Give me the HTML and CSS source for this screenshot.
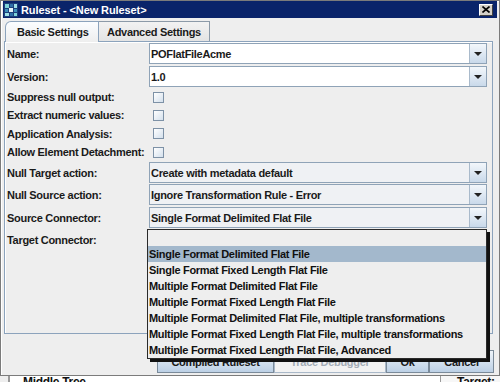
FILE: index.html
```html
<!DOCTYPE html>
<html>
<head>
<meta charset="utf-8">
<title>Ruleset</title>
<link rel="stylesheet" href="styles.css">
</head>
<body>
<div class="dialog">
  <div class="titlebar">
    <svg class="app-icon" viewBox="0 0 14 14" width="14" height="14">
      <rect x="0" y="0" width="14" height="14" fill="#1d3f7a"/>
      <rect x="1" y="1" width="4" height="4" fill="#7fd3d8"/>
      <rect x="6" y="1" width="3" height="3" fill="#2f6fa8"/>
      <rect x="10" y="1" width="3" height="4" fill="#9fe0e6"/>
      <rect x="1" y="6" width="3" height="3" fill="#3c8fb8"/>
      <rect x="5" y="5" width="4" height="4" fill="#e6f4f6"/>
      <rect x="10" y="6" width="3" height="3" fill="#3c8fb8"/>
      <rect x="1" y="10" width="4" height="3" fill="#9fe0e6"/>
      <rect x="6" y="10" width="3" height="3" fill="#2f6fa8"/>
      <rect x="10" y="10" width="3" height="3" fill="#7fd3d8"/>
    </svg>
    <span class="title">Ruleset - &lt;New Ruleset&gt;</span>
    <span class="close">
      <svg viewBox="0 0 8 7" width="8" height="7">
        <path d="M0.5 0.5 L7.5 6.5 M7.5 0.5 L0.5 6.5" stroke="#000" stroke-width="1.6" fill="none"/>
      </svg>
    </span>
  </div>

  <div class="tabs">
    <div class="tab selected">Basic Settings</div>
    <div class="tab other">Advanced Settings</div>
  </div>

  <div class="panel">
    <div class="row combo-row gap2">
      <span class="lbl">Name:</span>
      <div class="combo edit"><span class="field">POFlatFileAcme</span><span class="arrow"><svg viewBox="0 0 8 4" width="8" height="4"><polygon points="0,0 8,0 4,4" fill="#222"/></svg></span></div>
    </div>
    <div class="row combo-row gap2">
      <span class="lbl">Version:</span>
      <div class="combo edit"><span class="field">1.0</span><span class="arrow"><svg viewBox="0 0 8 4" width="8" height="4"><polygon points="0,0 8,0 4,4" fill="#222"/></svg></span></div>
    </div>
    <div class="row check-row">
      <span class="lbl">Suppress null output:</span><span class="checkbox"></span>
    </div>
    <div class="row check-row">
      <span class="lbl">Extract numeric values:</span><span class="checkbox"></span>
    </div>
    <div class="row check-row tall">
      <span class="lbl">Application Analysis:</span><span class="checkbox"></span>
    </div>
    <div class="row check-row">
      <span class="lbl">Allow Element Detachment:</span><span class="checkbox"></span>
    </div>
    <div class="row combo-row gap1">
      <span class="lbl">Null Target action:</span>
      <div class="combo"><span class="field">Create with metadata default</span><span class="arrow"><svg viewBox="0 0 8 4" width="8" height="4"><polygon points="0,0 8,0 4,4" fill="#222"/></svg></span></div>
    </div>
    <div class="row combo-row gap2">
      <span class="lbl">Null Source action:</span>
      <div class="combo"><span class="field">Ignore Transformation Rule - Error</span><span class="arrow"><svg viewBox="0 0 8 4" width="8" height="4"><polygon points="0,0 8,0 4,4" fill="#222"/></svg></span></div>
    </div>
    <div class="row combo-row gap1">
      <span class="lbl">Source Connector:</span>
      <div class="combo"><span class="field">Single Format Delimited Flat File</span><span class="arrow"><svg viewBox="0 0 8 4" width="8" height="4"><polygon points="0,0 8,0 4,4" fill="#222"/></svg></span></div>
    </div>
    <div class="row combo-row">
      <span class="lbl">Target Connector:</span>
      <div class="combo"><span class="field"></span><span class="arrow"><svg viewBox="0 0 8 4" width="8" height="4"><polygon points="0,0 8,0 4,4" fill="#222"/></svg></span></div>
    </div>
  </div>

  <div class="buttons">
    <button class="btn w-compiled">Compiled Ruleset</button>
    <button class="btn w-trace" disabled>Trace Debugger</button>
    <button class="btn w-ok">Ok</button>
    <button class="btn w-cancel">Cancel</button>
  </div>
</div>

<div class="backdrop">
  <div class="bd-gutter"></div>
  <div class="bd-left"><span>Middle Tree</span></div>
  <div class="bd-right"><span>Target: m</span></div>
</div>

<ul class="popup">
  <li class="item"></li>
  <li class="item active">Single Format Delimited Flat File</li>
  <li class="item">Single Format Fixed Length Flat File</li>
  <li class="item">Multiple Format Delimited Flat File</li>
  <li class="item">Multiple Format Fixed Length Flat File</li>
  <li class="item">Multiple Format Delimited Flat File, multiple transformations</li>
  <li class="item">Multiple Format Fixed Length Flat File, multiple transformations</li>
  <li class="item">Multiple Format Fixed Length Flat File, Advanced</li>
</ul>
</body>
</html>
```

FILE: styles.css
```css
* { box-sizing: border-box; }
html, body { margin: 0; padding: 0; }
body {
  width: 500px;
  height: 382px;
  overflow: hidden;
  position: relative;
  background: #eeeeee;
  font-family: "Liberation Sans", Arial, sans-serif;
  font-size: 11px;
  font-weight: bold;
  letter-spacing: -0.3px;
  color: #1a1a1a;
}

.dialog {
  width: 500px;
  height: 376px;
  border: 1px solid #7b7b7b;
  box-shadow: inset 1px 1px 0 #ffffff;
  background: #eeeeee;
  padding: 0 1px 2px;
  display: flex;
  flex-direction: column;
}

.titlebar {
  height: 17px;
  margin: 0 1px;
  padding-left: 1px;
  background: #0a246a;
  display: flex;
  align-items: center;
  color: #ffffff;
}
.app-icon { flex: none; margin-right: 3px; }
.title { flex: 1; letter-spacing: -0.1px; }
.close {
  width: 14px;
  height: 12px;
  margin-right: 4px;
  background: #d4d0c8;
  border: 1px solid;
  border-color: #ffffff #404040 #404040 #ffffff;
  display: flex;
  align-items: center;
  justify-content: center;
}

.tabs {
  display: flex;
  margin-top: 3px;
  padding-left: 3px;
  height: 20px;
}
.tab {
  height: 20px;
  display: flex;
  align-items: center;
  border: 1px solid #8c9aa8;
  border-bottom: none;
  color: #1a1a1a;
}
.tab.selected {
  width: 94px;
  height: 21px;
  padding-left: 11px;
  border-color: #8ca3bc;
  border-top-left-radius: 6px;
  background: linear-gradient(#fbfdff, #eeeeee);
  position: relative;
  z-index: 1;
}
.tab.other {
  width: 111px;
  padding-left: 8px;
  border-left: none;
  background: linear-gradient(#f2f2f2, #e4e4e4);
}

.panel {
  margin-left: 2px;
  width: 489px;
  height: 293px;
  border: 1px solid #8ca3bc;
  box-shadow: inset 1px 1px 0 #ffffff;
  padding-top: 1px;
}

.row { display: flex; align-items: center; }
.combo-row { height: 21px; }
.gap2 { margin-bottom: 2px; }
.gap1 { margin-bottom: 1px; }
.check-row { height: 16px; margin-bottom: 2px; }
.check-row.tall { height: 17px; }
.lbl { width: 144px; flex: none; padding-left: 2px; white-space: nowrap; }

.combo {
  width: 338px;
  height: 21px;
  display: flex;
  border: 1px solid #8fa3b7;
  background: #eff1f4;
}
.combo.edit { background: #ffffff; }
.combo .field {
  flex: 1;
  padding-left: 1px;
  display: flex;
  align-items: center;
  white-space: nowrap;
  overflow: hidden;
}
.combo .arrow {
  width: 17px;
  flex: none;
  border-left: 1px solid #a9bacb;
  background: linear-gradient(#f3f7fb, #c9d9ea);
  display: flex;
  align-items: center;
  justify-content: center;
}

.checkbox {
  width: 11px;
  height: 11px;
  margin-left: 4px;
  border: 1px solid #7d91a6;
  background: linear-gradient(135deg, #ffffff, #d4e0ec);
}

.buttons {
  display: flex;
  justify-content: flex-end;
  margin-top: 16px;
  padding-right: 4px;
  height: 23px;
}
.btn {
  height: 23px;
  margin: 0;
  padding: 0;
  font: inherit;
  letter-spacing: inherit;
  color: #1a1a1a;
  border: 1px solid #7a8a99;
  background: linear-gradient(#eef4fa, #bcd0e5);
}
.btn[disabled] {
  color: #a3acb6;
  border-color: #a9b8c8;
  background: #f2f2f2;
}
.w-compiled { width: 117px; }
.w-trace { width: 112px; }
.w-ok { width: 43px; }
.w-cancel { width: 65px; }

.backdrop {
  display: flex;
  height: 6px;
  overflow: hidden;
  font-size: 12px;
  line-height: 14px;
  color: #111;
}
.bd-gutter { width: 10px; background: #eeeeee; border-right: 2px solid #9a9a9a; }
.bd-left { width: 430px; background: #ffffff; padding-left: 13px; margin-top: -1px; }
.bd-right { flex: 1; background: #f7f7f7; border-left: 1px solid #9a9a9a; padding-left: 16px; margin-top: -1px; }

.popup {
  position: absolute;
  left: 147px;
  top: 229px;
  width: 340px;
  margin: 0;
  padding: 0;
  list-style: none;
  background: #eeeeee;
  border: 1px solid #2a2a2a;
  box-shadow: 3px 3px 0 #111111;
  z-index: 5;
}
.item {
  height: 16px;
  line-height: 16px;
  padding-left: 1px;
  white-space: nowrap;
  color: #111;
}
.item.active { background: #a3b8cc; }
```
